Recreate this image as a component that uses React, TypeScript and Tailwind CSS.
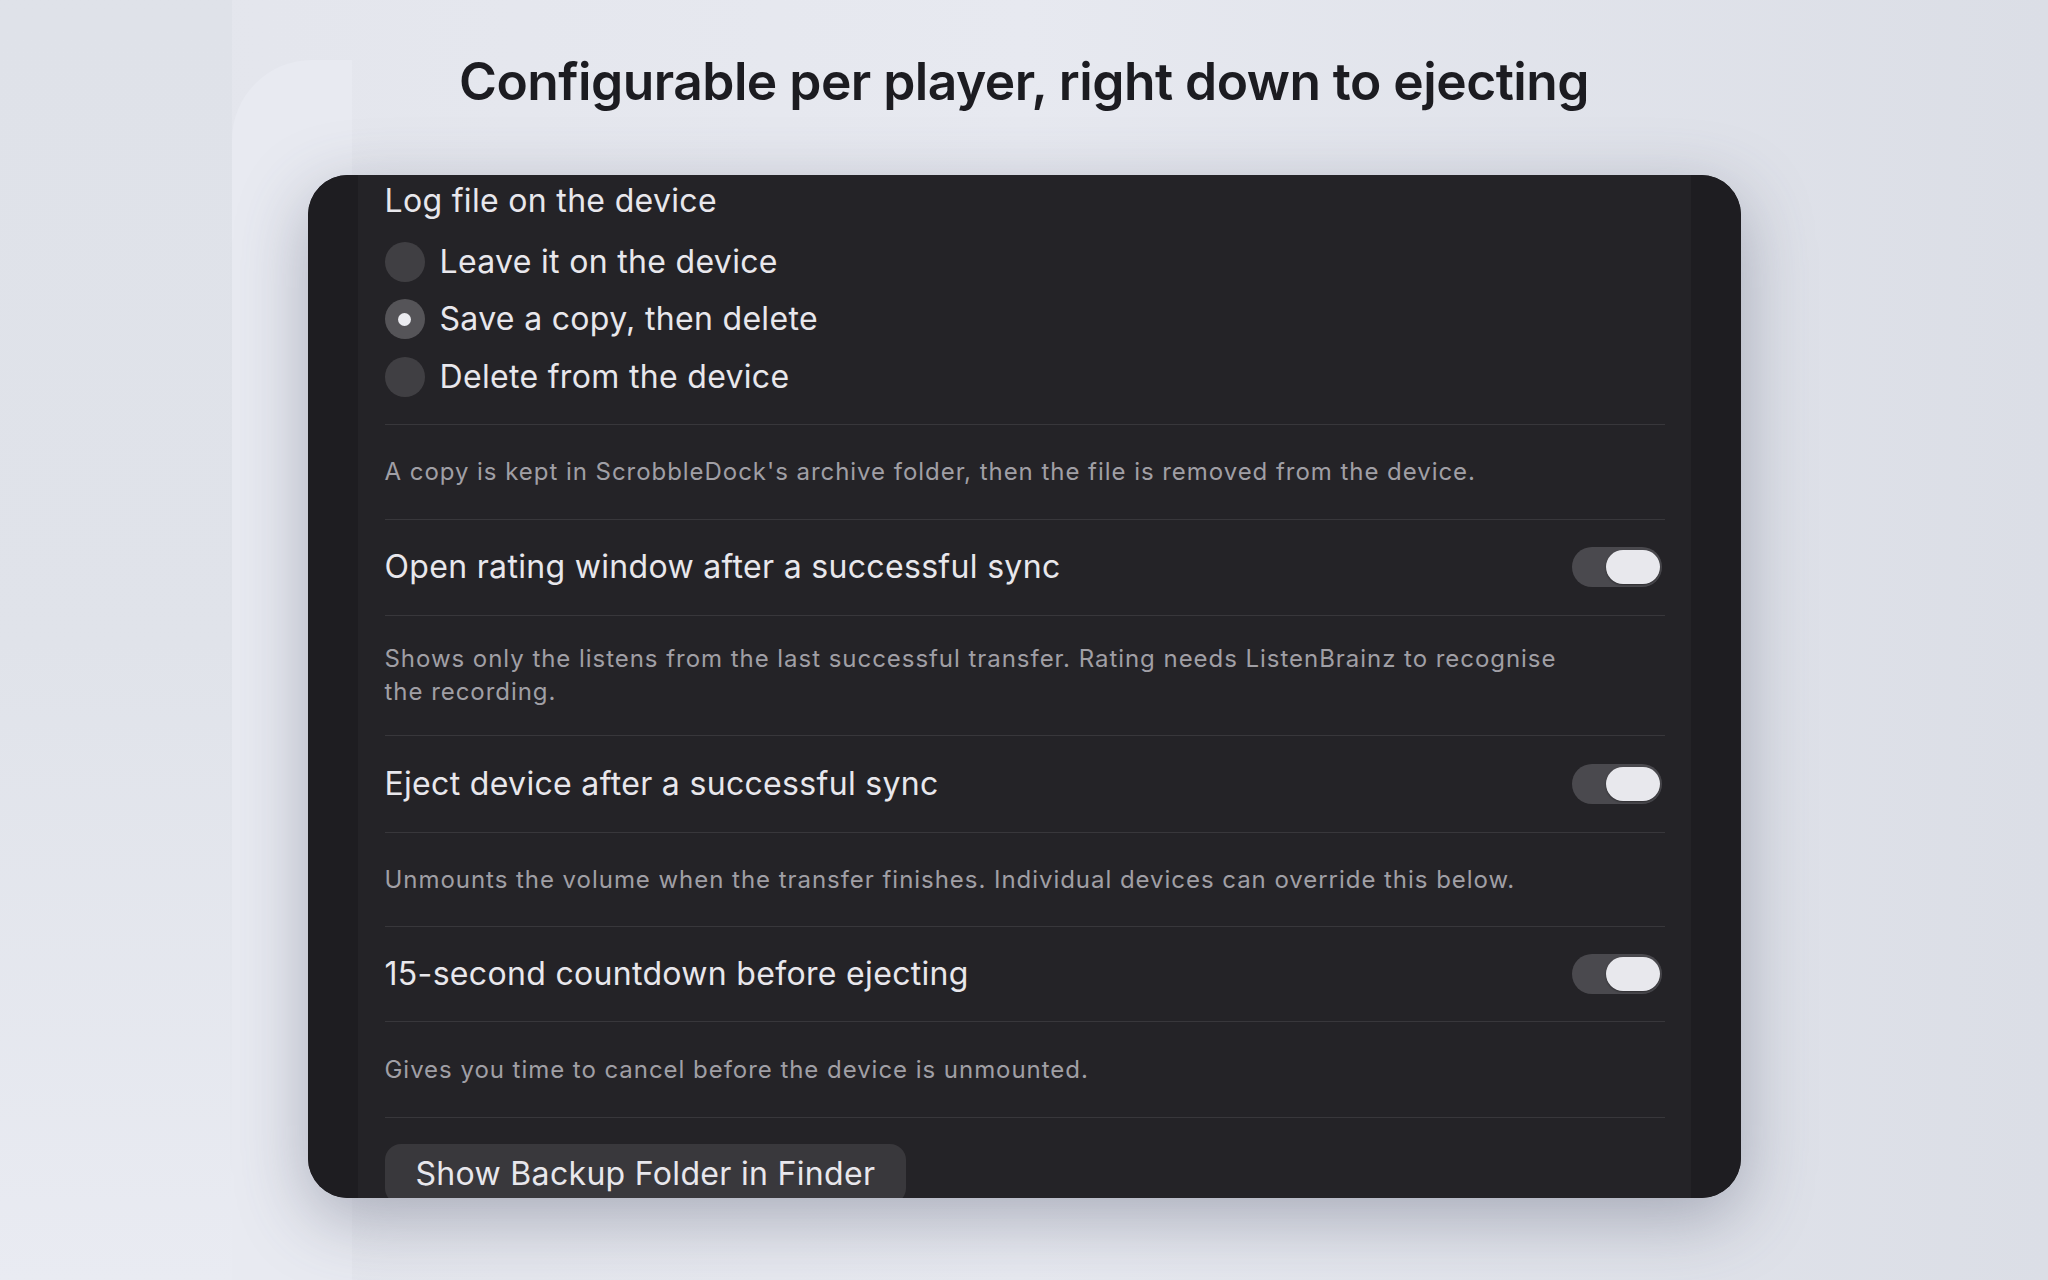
import React from 'react';

const font = { fontFamily: 'Inter, "Noto Sans", sans-serif' };

function Radio({ label, checked }: { label: string; checked?: boolean }) {
  return (
    <div className="flex h-[57.5px] items-center gap-[15px]">
      <div
        className={
          checked
            ? 'flex h-[40px] w-[40px] items-center justify-center rounded-full bg-[#555458]'
            : 'h-[40px] w-[40px] rounded-full bg-[#403f43]'
        }
      >
        {checked && <div className="h-[13px] w-[13px] rounded-full bg-[#ebebf0]" />}
      </div>
      <span className="text-[32px] leading-[40px] tracking-[0.01em] text-[#e8e7ec]">{label}</span>
    </div>
  );
}

function Toggle() {
  return (
    <div className="flex h-[40px] w-[90px] items-center justify-end rounded-full bg-[#4a494e] pr-[2px]">
      <div className="h-[34px] w-[54px] rounded-full bg-[#e8e8ed] shadow-[0_1px_2px_rgba(0,0,0,0.4)]" />
    </div>
  );
}

function ToggleRow({ label, h }: { label: string; h: string }) {
  return (
    <div className={`flex items-center justify-between border-t border-[#38373b] pr-[3px] ${h}`}>
      <span className="text-[32px] leading-[40px] tracking-[0.01em] text-[#e8e7ec]">{label}</span>
      <Toggle />
    </div>
  );
}

function Desc({ children, h }: { children: React.ReactNode; h: string }) {
  return (
    <div className={`flex items-center border-t border-[#38373b] ${h}`}>
      <p className="max-w-[1200px] text-[24px] leading-[33px] tracking-[0.04em] text-[#a09fa5]">{children}</p>
    </div>
  );
}

export default function App() {
  return (
    <div className="relative min-h-[1280px] w-full overflow-hidden bg-gradient-to-r from-[#e3e5ec] via-[#e7e9f0] to-[#dbdee6]" style={font}>
      <div className="absolute left-0 top-0 h-[1280px] w-[232px] bg-gradient-to-b from-[#dfe2e9] via-[#e0e3ea] to-[#e9ebf2]" />
      <div className="absolute left-[232px] top-[60px] h-[1220px] w-[120px] rounded-tl-[80px] bg-[#e8eaf1]" />

      <div className="relative flex flex-col items-center">
        <h1 className="pt-[50px] text-[51.5px] font-semibold leading-[62px] tracking-[-0.01em] text-[#1c1c21]">
          Configurable per player, right down to ejecting
        </h1>

        <div className="mt-[63px] flex h-[1023px] w-[1433px] overflow-hidden rounded-[40px] bg-[#1e1d21] shadow-[0_20px_70px_rgba(70,75,100,0.38)]">
          <div className="w-[50px] bg-[#1e1d21]" />
          <div className="flex-1 overflow-hidden bg-[#242327] pl-[27px] pr-[26px]">
            <div className="pt-[6px] text-[32px] leading-[40px] tracking-[0.01em] text-[#e8e7ec]">Log file on the device</div>
            <div className="mt-[12px]">
              <Radio label="Leave it on the device" />
              <Radio label="Save a copy, then delete" checked />
              <Radio label="Delete from the device" />
            </div>
            <div className="mt-[18px]">
              <Desc h="h-[95px]">
                A copy is kept in ScrobbleDock's archive folder, then the file is removed from the device.
              </Desc>
              <ToggleRow label="Open rating window after a successful sync" h="h-[96px]" />
              <Desc h="h-[120px]">
                Shows only the listens from the last successful transfer. Rating needs ListenBrainz to recognise
                the recording.
              </Desc>
              <ToggleRow label="Eject device after a successful sync" h="h-[97px]" />
              <Desc h="h-[94px]">
                Unmounts the volume when the transfer finishes. Individual devices can override this below.
              </Desc>
              <ToggleRow label="15-second countdown before ejecting" h="h-[95px]" />
              <Desc h="h-[96px]">Gives you time to cancel before the device is unmounted.</Desc>
              <div className="border-t border-[#38373b] pt-[26px]">
                <button className="h-[60px] rounded-[16px] bg-[#39383c] px-[31px] text-[32px] leading-[60px] tracking-[0.01em] text-[#e8e7ec]">
                  Show Backup Folder in Finder
                </button>
              </div>
            </div>
          </div>
          <div className="w-[50px] bg-[#1e1d21]" />
        </div>
      </div>
    </div>
  );
}
